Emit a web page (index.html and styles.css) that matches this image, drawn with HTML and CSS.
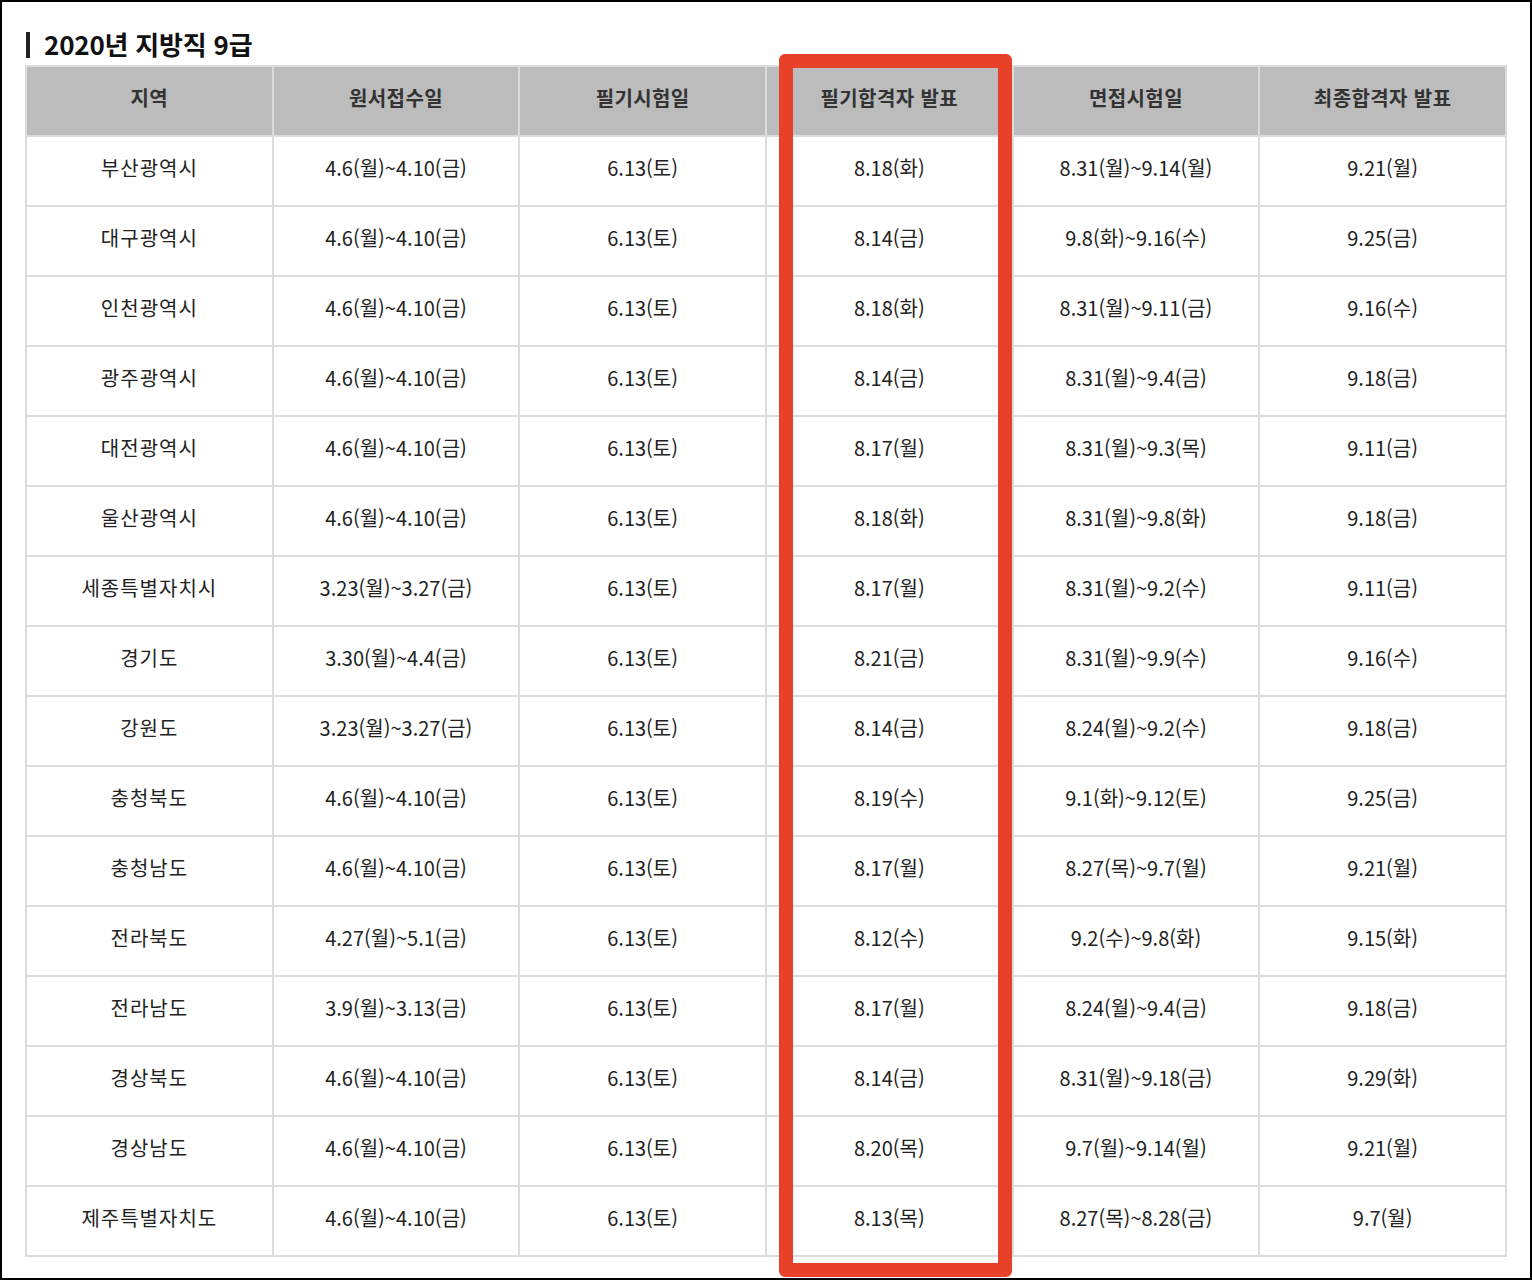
FILE: index.html
```html
<!DOCTYPE html>
<html lang="ko">
<head>
<meta charset="utf-8">
<link rel="stylesheet" href="styles.css">
</head>
<body>
<div class="frame">
  <h2 class="title"><span class="bar"></span>2020년 지방직 9급</h2>
  <table class="sched">
    <thead>
      <tr><th>지역</th><th>원서접수일</th><th>필기시험일</th><th>필기합격자 발표</th><th>면접시험일</th><th>최종합격자 발표</th></tr>
    </thead>
    <tbody>
      <tr><td>부산광역시</td><td>4.6(월)~4.10(금)</td><td>6.13(토)</td><td>8.18(화)</td><td>8.31(월)~9.14(월)</td><td>9.21(월)</td></tr>
      <tr><td>대구광역시</td><td>4.6(월)~4.10(금)</td><td>6.13(토)</td><td>8.14(금)</td><td>9.8(화)~9.16(수)</td><td>9.25(금)</td></tr>
      <tr><td>인천광역시</td><td>4.6(월)~4.10(금)</td><td>6.13(토)</td><td>8.18(화)</td><td>8.31(월)~9.11(금)</td><td>9.16(수)</td></tr>
      <tr><td>광주광역시</td><td>4.6(월)~4.10(금)</td><td>6.13(토)</td><td>8.14(금)</td><td>8.31(월)~9.4(금)</td><td>9.18(금)</td></tr>
      <tr><td>대전광역시</td><td>4.6(월)~4.10(금)</td><td>6.13(토)</td><td>8.17(월)</td><td>8.31(월)~9.3(목)</td><td>9.11(금)</td></tr>
      <tr><td>울산광역시</td><td>4.6(월)~4.10(금)</td><td>6.13(토)</td><td>8.18(화)</td><td>8.31(월)~9.8(화)</td><td>9.18(금)</td></tr>
      <tr><td>세종특별자치시</td><td>3.23(월)~3.27(금)</td><td>6.13(토)</td><td>8.17(월)</td><td>8.31(월)~9.2(수)</td><td>9.11(금)</td></tr>
      <tr><td>경기도</td><td>3.30(월)~4.4(금)</td><td>6.13(토)</td><td>8.21(금)</td><td>8.31(월)~9.9(수)</td><td>9.16(수)</td></tr>
      <tr><td>강원도</td><td>3.23(월)~3.27(금)</td><td>6.13(토)</td><td>8.14(금)</td><td>8.24(월)~9.2(수)</td><td>9.18(금)</td></tr>
      <tr><td>충청북도</td><td>4.6(월)~4.10(금)</td><td>6.13(토)</td><td>8.19(수)</td><td>9.1(화)~9.12(토)</td><td>9.25(금)</td></tr>
      <tr><td>충청남도</td><td>4.6(월)~4.10(금)</td><td>6.13(토)</td><td>8.17(월)</td><td>8.27(목)~9.7(월)</td><td>9.21(월)</td></tr>
      <tr><td>전라북도</td><td>4.27(월)~5.1(금)</td><td>6.13(토)</td><td>8.12(수)</td><td>9.2(수)~9.8(화)</td><td>9.15(화)</td></tr>
      <tr><td>전라남도</td><td>3.9(월)~3.13(금)</td><td>6.13(토)</td><td>8.17(월)</td><td>8.24(월)~9.4(금)</td><td>9.18(금)</td></tr>
      <tr><td>경상북도</td><td>4.6(월)~4.10(금)</td><td>6.13(토)</td><td>8.14(금)</td><td>8.31(월)~9.18(금)</td><td>9.29(화)</td></tr>
      <tr><td>경상남도</td><td>4.6(월)~4.10(금)</td><td>6.13(토)</td><td>8.20(목)</td><td>9.7(월)~9.14(월)</td><td>9.21(월)</td></tr>
      <tr><td>제주특별자치도</td><td>4.6(월)~4.10(금)</td><td>6.13(토)</td><td>8.13(목)</td><td>8.27(목)~8.28(금)</td><td>9.7(월)</td></tr>
    </tbody>
  </table>
  <div class="highlight"></div>
</div>
</body>
</html>
```

FILE: styles.css
```css
html, body {
  margin: 0;
  padding: 0;
  background: #fff;
}
body {
  font-family: "Noto Sans CJK KR", "Noto Sans", sans-serif;
  color: #222;
}
.frame {
  position: relative;
  box-sizing: border-box;
  width: 1532px;
  height: 1280px;
  border: 2px solid #000;
  padding: 27px 24px 0 24px;
}
.title {
  display: flex;
  align-items: center;
  margin: 0 0 8px 0;
  height: 28px;
  font-size: 26px;
  font-weight: 700;
  letter-spacing: -0.2px;
  color: #111;
}
.bar {
  display: inline-block;
  width: 4px;
  height: 26px;
  background: #222;
  margin-right: 14px;
  margin-top: 4px;
}
.sched {
  width: 1482px;
  border-collapse: collapse;
  table-layout: fixed;
  margin-left: -1px;
}
.sched th, .sched td {
  border: 2px solid #dcdcdc;
  text-align: center;
  vertical-align: middle;
  padding: 0 0 6px 0;
  line-height: 1.2;
  font-size: 20px;
  letter-spacing: 0;
}
.sched th {
  background: #bcbcbc;
  color: #333;
  font-weight: 700;
  letter-spacing: 0.4px;
  height: 62px;
}
.sched td {
  height: 62px;
  color: #222;
  font-weight: 400;
}
.sched td:first-child {
  letter-spacing: 1px;
}
.highlight {
  position: absolute;
  left: 777px;
  top: 52px;
  width: 233px;
  height: 1223px;
  box-sizing: border-box;
  border: 14px solid #e8412a;
  border-radius: 6px;
}
```
